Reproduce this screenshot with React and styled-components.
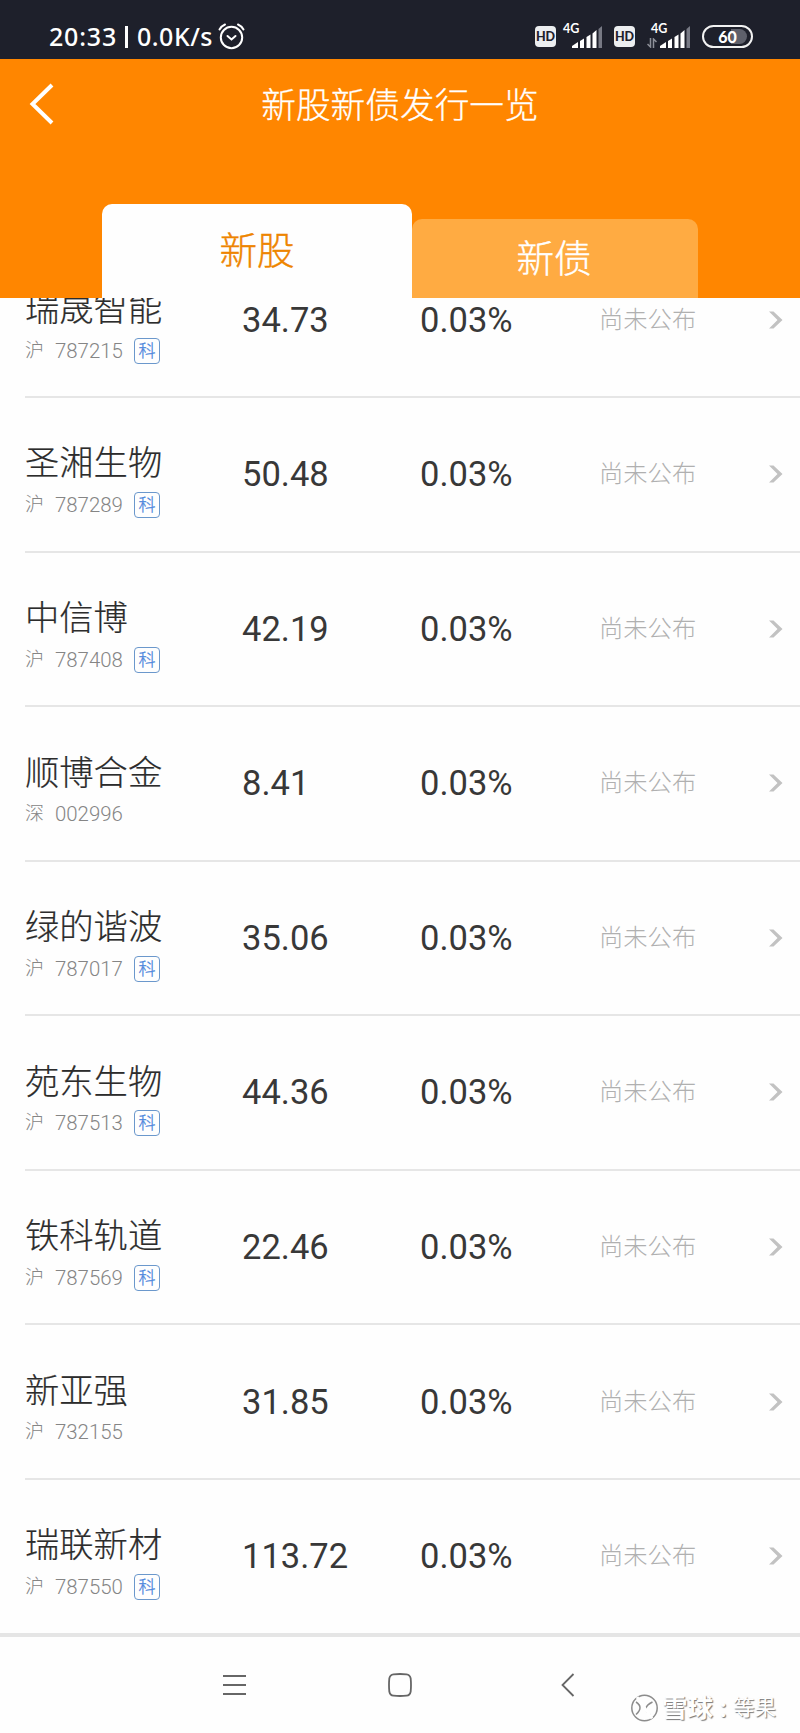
import React from "react";
import styled, { createGlobalStyle } from "styled-components";

const GlobalStyle = createGlobalStyle`
  * {
    box-sizing: border-box;
  }

  body {
    margin: 0;
    background: #fefefe;
    font-family: Roboto, "Noto Sans CJK SC", sans-serif;
  }
`;

const Screen = styled.div`
  width: 800px;
  height: 1733px;
  display: flex;
  flex-direction: column;
  overflow: hidden;
  background: #fefefe;
`;

const StatusBar = styled.div`
  height: 59px;
  padding: 14px 47px 0 49px;
  display: flex;
  align-items: center;
  justify-content: space-between;
  background: #1e202b;
  color: #fff;
`;

const StatusGroup = styled.div`
  display: flex;
  align-items: center;
`;

const Clock = styled.span`
  font-family: "Noto Sans", sans-serif;
  font-size: 25px;
  line-height: 28px;
  padding-bottom: 2px;
  font-weight: 500;
  width: ${(props) => props.$width}px;
  letter-spacing: ${(props) => props.$spacing || 0}px;
  white-space: nowrap;
`;

const Separator = styled.span`
  width: 3px;
  height: 22px;
  margin: 0 9px 0 8px;
  background: #fff;
`;

const HdBadge = styled.span`
  width: 21px;
  height: 21px;
  display: flex;
  align-items: center;
  justify-content: center;
  border-radius: 4px;
  background: #eceef0;
  color: #1e202b;
  font-family: Lato, sans-serif;
  font-size: 12.5px;
  font-weight: 900;
`;

const Signal = styled.div`
  width: ${(props) => props.$width}px;
  height: 22px;
  margin: 0 12px 0 ${(props) => props.$left}px;
  display: flex;
  justify-content: flex-end;
  position: relative;
`;

const NetworkType = styled.span`
  position: absolute;
  left: ${(props) => props.$left}px;
  top: -3px;
  font-family: Lato, sans-serif;
  font-size: 12.5px;
  line-height: 12px;
  font-weight: 700;
`;

const ArrowSlot = styled.span`
  margin-right: 3px;
  display: flex;
  align-items: flex-end;
`;

const Battery = styled.div`
  width: 51px;
  height: 23px;
  padding: 2px;
  border: 2px solid #f2f2f2;
  border-radius: 12px;
`;

const BatteryLevel = styled.div`
  width: 39px;
  height: 15px;
  margin-left: 2px;
  display: flex;
  align-items: center;
  justify-content: center;
  border-radius: 8px;
  background: linear-gradient(90deg, transparent 60%, #5e606b 60%);
  font-family: Lato, sans-serif;
  font-size: 16px;
  font-weight: 900;
`;

const Header = styled.header`
  height: 239px;
  display: flex;
  flex-direction: column;
  justify-content: space-between;
  background: #ff8600;
`;

const TitleBar = styled.div`
  height: 92px;
  padding: 2px 29px 0;
  display: grid;
  grid-template-columns: 25px 1fr 25px;
  align-items: center;

  svg {
    margin-bottom: 4px;
  }
`;

const Title = styled.h1`
  margin: 0;
  color: #fff;
  font-size: 34.7px;
  font-weight: 300;
  line-height: 40px;
  text-align: center;
  -webkit-text-stroke: 0.3px #fff;
`;

const Tabs = styled.div`
  display: flex;
  align-items: flex-end;
  padding-left: 102px;
`;

const Tab = styled.div`
  width: ${(props) => (props.$active ? 310 : 286)}px;
  height: ${(props) => (props.$active ? 94 : 79)}px;
  padding-right: ${(props) => (props.$active ? 0 : 2)}px;
  display: flex;
  align-items: center;
  justify-content: center;
  border-radius: 10px 10px 0 0;
  background: ${(props) => (props.$active ? "#fefefe" : "#ffab42")};
  color: ${(props) => (props.$active ? "#ee8500" : "#fff")};
  font-size: 37.6px;
  font-weight: 300;
  line-height: 40px;
  -webkit-text-stroke: 0.4px currentColor;
`;

/* the list is scrolled, so the first row is cut by the header */
const List = styled.main`
  height: 1335px;
  display: flex;
  flex-direction: column;
  justify-content: flex-end;
  overflow: hidden;
`;

const Row = styled.div`
  height: 154.55px;
  flex-shrink: 0;
  margin-left: 25px;
  display: grid;
  grid-template-columns: 217px 178px 179px 1fr 17px;
  align-items: center;
  padding-right: 15px;
  border-bottom: 2px solid #e6e6e6;

  &:last-child {
    margin-bottom: -1.4px;
    border-bottom-color: transparent;
  }
`;

const Stock = styled.div`
  padding-top: 13px;
`;

const Name = styled.div`
  color: #2c2c2c;
  font-size: 34.3px;
  font-weight: 300;
  line-height: 40px;
  -webkit-text-stroke: 0.2px currentColor;
`;

const Code = styled.div`
  height: 26px;
  margin-top: 8.6px;
  display: flex;
  align-items: center;
  color: #858585;
  font-size: 20.4px;
  font-weight: 300;
  line-height: 26px;
`;

const Market = styled.span`
  width: 30px;
  font-size: 19px;
`;

const Tag = styled.span`
  width: 26px;
  height: 26px;
  margin-left: 11px;
  display: flex;
  align-items: center;
  justify-content: center;
  border: 1.5px solid #6b98cc;
  border-radius: 4px;
  color: #4c86dc;
  font-size: 17px;
  font-weight: 300;
  -webkit-text-stroke: 0.3px currentColor;
`;

const Value = styled.span`
  color: #383838;
  font-size: 34.5px;
  line-height: 40px;
`;

const Pending = styled.span`
  color: #b0b0b0;
  font-size: 24.3px;
  font-weight: 300;
  line-height: 30px;
`;

const NavBar = styled.nav`
  height: 100px;
  border-top: 4px solid #e5e5e5;
  padding-left: 223px;
  display: grid;
  grid-template-columns: 165px 173px 1fr;
  align-items: center;
  position: relative;
`;

const Watermark = styled.div`
  position: absolute;
  left: 630px;
  top: 57px;
  display: flex;
  align-items: center;
  color: #fff;
  font-size: 25.5px;
  font-weight: 700;
  line-height: 28px;
  text-shadow: 1px 1px 1px #777;
  white-space: nowrap;
`;

const Brand = styled.span`
  margin-left: 3px;
`;

const Colon = styled.span`
  width: 20px;
  text-align: center;
`;

const Author = styled.span`
  font-size: 21.5px;
  font-weight: 400;
`;

const stocks = [
  { name: "瑞晟智能", market: "沪", code: "787215", tag: "科", price: "34.73" },
  { name: "圣湘生物", market: "沪", code: "787289", tag: "科", price: "50.48" },
  { name: "中信博", market: "沪", code: "787408", tag: "科", price: "42.19" },
  { name: "顺博合金", market: "深", code: "002996", price: "8.41" },
  { name: "绿的谐波", market: "沪", code: "787017", tag: "科", price: "35.06" },
  { name: "苑东生物", market: "沪", code: "787513", tag: "科", price: "44.36" },
  { name: "铁科轨道", market: "沪", code: "787569", tag: "科", price: "22.46" },
  { name: "新亚强", market: "沪", code: "732155", price: "31.85" },
  { name: "瑞联新材", market: "沪", code: "787550", tag: "科", price: "113.72" },
];

function AlarmIcon() {
  return (
    <svg width="27" height="27" viewBox="0 0 27 27" fill="none" stroke="#fff" strokeWidth="2" strokeLinecap="round">
      <circle cx="13.5" cy="14.5" r="10.7" />
      <path d="M9.5 13l4 3.5 4-3.5M1.5 6.5q2-3.5 5.5-5M25.5 6.5q-2-3.5-5.5-5" />
    </svg>
  );
}

function SignalBars() {
  return (
    <svg width="30" height="22" viewBox="0 0 30 22" fill="#fff">
      <path d="M0 22v-2l6-4v6zM8 15l4-2.500V22H8zM14.500 11l4-2.500V22h-4zM20.500 7.500l4-3.500v18h-4z" />
      <path d="M26.500 3L30 0v22h-3.500z" fill="#777984" />
    </svg>
  );
}

function DataArrows() {
  return (
    <svg width="10" height="10" viewBox="0 0 10 10" fill="none" stroke="#8d8f98" strokeWidth="1.5">
      <path d="M3.500 0v9L.5 6M6.500 10V1l3 3" />
    </svg>
  );
}

function StockRow({ stock }) {
  return (
    <Row>
      <Stock>
        <Name>{stock.name}</Name>
        <Code>
          <Market>{stock.market}</Market>
          <span>{stock.code}</span>
          {stock.tag && <Tag>{stock.tag}</Tag>}
        </Code>
      </Stock>
      <Value>{stock.price}</Value>
      <Value>0.03%</Value>
      <Pending>尚未公布</Pending>
      <svg width="17" height="18" viewBox="0 0 17 18" fill="#c2c2c2">
        <path d="M1 .5h4.500L14.500 9l-9 8.500H1L9.500 9z" />
      </svg>
    </Row>
  );
}

function App() {
  return (
    <Screen>
      <GlobalStyle />
      <StatusBar>
        <StatusGroup>
          <Clock $width={68} $spacing={0.8}>20:33</Clock>
          <Separator />
          <Clock $width={81} $spacing={0.5}>0.0K/s</Clock>
          <AlarmIcon />
        </StatusGroup>
        <StatusGroup>
          <HdBadge>HD</HdBadge>
          <Signal $width={39} $left={7}>
            <NetworkType $left={0}>4G</NetworkType>
            <SignalBars />
          </Signal>
          <HdBadge>HD</HdBadge>
          <Signal $width={43} $left={12}>
            <NetworkType $left={4}>4G</NetworkType>
            <ArrowSlot>
              <DataArrows />
            </ArrowSlot>
            <SignalBars />
          </Signal>
          <Battery>
            <BatteryLevel>60</BatteryLevel>
          </Battery>
        </StatusGroup>
      </StatusBar>
      <Header>
        <TitleBar>
          <svg width="25" height="42" viewBox="0 0 25 42" fill="none" stroke="#fff" strokeWidth="4">
            <path d="M23 2L3.500 21 23 40" />
          </svg>
          <Title>新股新债发行一览</Title>
        </TitleBar>
        <Tabs>
          <Tab $active>新股</Tab>
          <Tab>新债</Tab>
        </Tabs>
      </Header>
      <List>
        {stocks.map((stock) => (
          <StockRow key={stock.code} stock={stock} />
        ))}
      </List>
      <NavBar>
        <svg width="23" height="20" viewBox="0 0 23 20" stroke="#666" strokeWidth="1.8">
          <path d="M0 1h23M0 10h23M0 19h23" />
        </svg>
        <svg width="24" height="24" viewBox="0 0 24 24" fill="none" stroke="#666" strokeWidth="1.8">
          <path d="M5.500 1.300Q12 .7 18.500 1.300 22 1.700 22.700 5.500 23.300 12 22.700 18.500 22 22.300 18.500 22.700 12 23.300 5.500 22.700 2 22.300 1.300 18.500.7 12 1.300 5.500 2 1.700 5.500 1.300z" />
        </svg>
        <svg width="14" height="24" viewBox="0 0 14 24" fill="none" stroke="#666" strokeWidth="1.8">
          <path d="M12.500 1L1.500 12l11 11" />
        </svg>
        <Watermark>
          <svg width="29" height="28" viewBox="0 0 29 28" fill="none">
            <g stroke="#8c8c8c" strokeWidth="1.500">
              <circle cx="14.500" cy="14" r="12.700" />
              <path d="M6 8q8 5 0 12.500M22.500 8q-12 6-2 13" />
            </g>
            <path d="M7 3l15 21.500" stroke="#fff" strokeWidth="3" />
          </svg>
          <Brand>雪球</Brand>
          <Colon>:</Colon>
          <Author>等果</Author>
        </Watermark>
      </NavBar>
    </Screen>
  );
}

export default App;
